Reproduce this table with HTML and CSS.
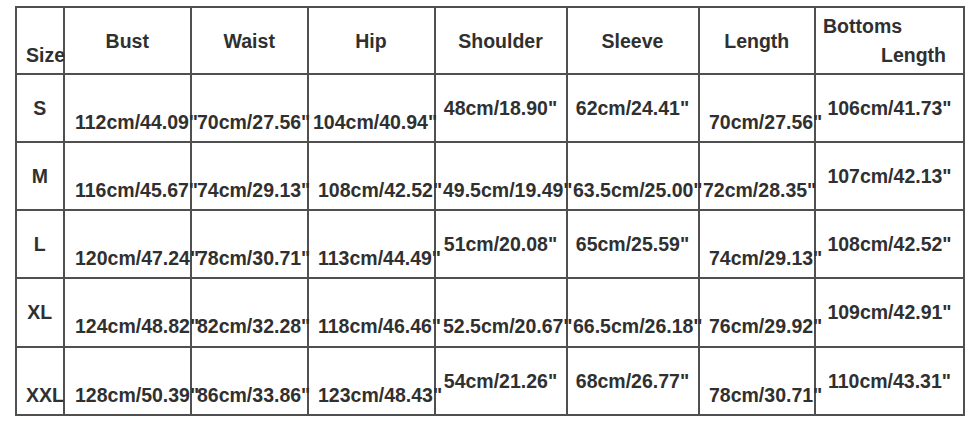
FILE: index.html
```html
<!DOCTYPE html>
<html lang="en">
<head>
<meta charset="utf-8">
<title>Size chart</title>
<link rel="stylesheet" href="styles.css">
</head>
<body>
<table class="chart">
  <colgroup>
    <col class="w-size"><col class="w-bust"><col class="w-waist"><col class="w-hip"><col class="w-shoulder"><col class="w-sleeve"><col class="w-length"><col class="w-bottoms">
  </colgroup>
  <tr class="head">
    <th class="size low">Size</th>
    <th class="mid">Bust</th>
    <th class="mid">Waist</th>
    <th class="mid">Hip</th>
    <th class="mid">Shoulder</th>
    <th class="mid">Sleeve</th>
    <th class="mid">Length</th>
    <th class="bottoms"><span class="l1">Bottoms</span><span class="l2">Length</span></th>
  </tr>
  <tr class="r1">
    <td class="mid">S</td>
    <td class="low bust">112cm/44.09"</td>
    <td class="low waist">70cm/27.56"</td>
    <td class="low hip hip-s">104cm/40.94"</td>
    <td class="mid">48cm/18.90"</td>
    <td class="mid">62cm/24.41"</td>
    <td class="low length">70cm/27.56"</td>
    <td class="mid">106cm/41.73"</td>
  </tr>
  <tr class="r2">
    <td class="mid">M</td>
    <td class="low bust">116cm/45.67"</td>
    <td class="low waist">74cm/29.13"</td>
    <td class="low hip">108cm/42.52"</td>
    <td class="low shoulder">49.5cm/19.49"</td>
    <td class="low sleeve">63.5cm/25.00"</td>
    <td class="low length length-m">72cm/28.35"</td>
    <td class="mid">107cm/42.13"</td>
  </tr>
  <tr class="r3">
    <td class="mid">L</td>
    <td class="low bust">120cm/47.24"</td>
    <td class="low waist">78cm/30.71"</td>
    <td class="low hip">113cm/44.49"</td>
    <td class="mid">51cm/20.08"</td>
    <td class="mid">65cm/25.59"</td>
    <td class="low length">74cm/29.13"</td>
    <td class="mid">108cm/42.52"</td>
  </tr>
  <tr class="r4">
    <td class="mid">XL</td>
    <td class="low bust">124cm/48.82"</td>
    <td class="low waist">82cm/32.28"</td>
    <td class="low hip">118cm/46.46"</td>
    <td class="low shoulder">52.5cm/20.67"</td>
    <td class="low sleeve">66.5cm/26.18"</td>
    <td class="low length">76cm/29.92"</td>
    <td class="mid">109cm/42.91"</td>
  </tr>
  <tr class="r5">
    <td class="size low">XXL</td>
    <td class="low bust">128cm/50.39"</td>
    <td class="low waist">86cm/33.86"</td>
    <td class="low hip">123cm/48.43"</td>
    <td class="mid">54cm/21.26"</td>
    <td class="mid">68cm/26.77"</td>
    <td class="low length">78cm/30.71"</td>
    <td class="mid">110cm/43.31"</td>
  </tr>
</table>
</body>
</html>
```

FILE: styles.css
```css
html, body {
  margin: 0;
  padding: 0;
  background: #ffffff;
}

body {
  padding: 6px 0 0 15px;
  font-family: "Liberation Sans", Arial, sans-serif;
  color: #303030;
}

.chart {
  table-layout: fixed;
  border-collapse: collapse;
  width: 950px;
  font-size: 19.5px;
  font-weight: bold;
  line-height: 22px;
}

.w-size { width: 47.5px; }
.w-bust { width: 127.5px; }
.w-waist { width: 116.5px; }
.w-hip { width: 127px; }
.w-shoulder { width: 132px; }
.w-sleeve { width: 132px; }
.w-length { width: 116.5px; }
.w-bottoms { width: 149px; }

.chart th,
.chart td {
  border: 2px solid #505050;
  padding: 0;
  vertical-align: top;
  white-space: nowrap;
  overflow: visible;
  font-weight: bold;
}

.chart .head { height: 67px; }
.chart .r1, .chart .r2, .chart .r3, .chart .r5 { height: 68px; }
.chart .r4 { height: 69px; }

.chart .mid {
  text-align: center;
  padding-top: 22px;
}

.chart .low {
  text-align: left;
  padding-top: 35.5px;
}

.chart .size.low { padding-left: 9px; }
.chart .bust { padding-left: 10.5px; }
.chart .waist { padding-left: 5px; }
.chart .hip { padding-left: 9.5px; }
.chart .hip-s { padding-left: 4.5px; }
.chart .shoulder { padding-left: 7.5px; }
.chart .sleeve { padding-left: 5.5px; }
.chart .length { padding-left: 9.5px; }
.chart .length-m { padding-left: 3.5px; }

.chart .bottoms {
  text-align: left;
  padding-top: 6.5px;
}

.bottoms .l1 {
  display: block;
  padding-left: 7px;
}

.bottoms .l2 {
  display: block;
  margin-top: 7px;
  text-align: right;
  padding-right: 17px;
}
```
